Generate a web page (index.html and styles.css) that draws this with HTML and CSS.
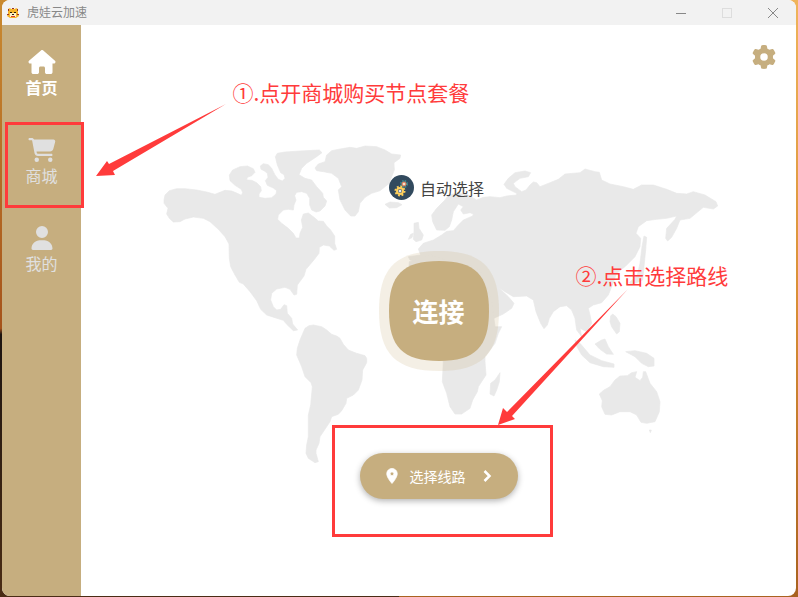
FILE: index.html
```html
<!DOCTYPE html>
<html lang="zh-CN">
<head>
    <meta charset="UTF-8">
    <meta name="viewport" content="width=device-width, initial-scale=1.0">
    <title>虎娃云加速</title>
    <link rel="stylesheet" href="styles.css">
</head>
<body>
    <div class="window">
        <header class="titlebar">
            <svg class="logo" viewBox="0 0 12 12">
                <path d="M1 2L3 1 4 2H8L9 1 11 2V7L12 9 9 11H3L0 9 1 7z" fill="#f5b52a"/>
                <path d="M1 2h1v2H1zM10 2h1v2h-1zM5 1h2v1H5zM0 7h2v1H0zM10 7h2v1h-2z" fill="#9c2f24"/>
                <path d="M3 6h6v4H3z" fill="#fff3c4"/>
                <path d="M3 5h2v1H3zM7 5h2v1H7zM5 7h2v1H5z" fill="#2b1b10"/>
                <path d="M4 9h4v1H4z" fill="#d93a2b"/>
            </svg>
            <h1>虎娃云加速</h1>
            <div class="controls">
                <button aria-label="最小化"><svg viewBox="0 0 12 12"><path d="M1 6.5h10"/></svg></button>
                <button aria-label="最大化" disabled><svg viewBox="0 0 12 12"><rect x="1.5" y="1.5" width="9" height="9"/></svg></button>
                <button aria-label="关闭"><svg viewBox="0 0 12 12"><path d="M1 1l10 10M11 1L1 11"/></svg></button>
            </div>
        </header>

        <div class="body">
            <nav class="sidebar">
                <a href="#home" class="item active">
                    <svg viewBox="0 0 576 512"><path d="M575.8 255.5c0 18-15 32.1-32 32.1h-32l.7 160.2c0 2.7-.2 5.4-.5 8.1V472c0 22.1-17.9 40-40 40H392c-22.1 0-40-17.9-40-40v-88c0-17.7-14.3-32-32-32h-64c-17.7 0-32 14.3-32 32v88c0 22.1-17.9 40-40 40h-80c-22.1 0-40-17.9-40-40V287.6H32c-18 0-32-14-32-32.1 0-9 3-17 10-24L266.4 8c7-7 15-8 22-8s15 2 21 7l255.4 224.5c8 7 12 15 11 24z"/></svg>
                    <span>首页</span>
                </a>
                <a href="#store" class="item marked">
                    <svg viewBox="0 0 576 512"><path d="M0 24C0 10.7 10.7 0 24 0h45.5c22 0 41.5 12.8 50.6 32h411c26.3 0 45.5 25 38.6 50.4l-41 152.3c-8.5 31.4-37 53.3-69.5 53.3H170.7l5.4 28.5c2.2 11.3 12.1 19.5 23.6 19.5H488c13.3 0 24 10.7 24 24s-10.7 24-24 24H199.7c-34.6 0-64.3-24.6-70.7-58.5L77.4 54.5c-.7-3.8-4-6.5-7.9-6.5H24C10.7 48 0 37.3 0 24zM128 464a48 48 0 1 1 96 0 48 48 0 1 1-96 0zm336-48a48 48 0 1 1 0 96 48 48 0 1 1 0-96z"/></svg>
                    <span>商城</span>
                </a>
                <a href="#mine" class="item">
                    <svg viewBox="0 0 448 512"><path d="M224 256a128 128 0 1 0 0-256 128 128 0 1 0 0 256zm-45.7 48C79.8 304 0 383.8 0 482.3 0 498.7 13.3 512 29.7 512h388.6c16.4 0 29.7-13.3 29.7-29.7C448 383.8 368.2 304 269.7 304z"/></svg>
                    <span>我的</span>
                </a>
            </nav>

            <main class="main">
                <svg class="map" viewBox="474 420 1683 990">
                    <!-- north america -->
                    <path transform="translate(480 420)" d="M12 180L15 165 28 152 50 146 75 146 110 150 140 156 165 163 180 157 195 151 215 153 232 160 244 166 248 158 244 148 225 136 210 122 208 105 218 90 240 80 262 78 280 86 285 97 275 107 262 112 260 120 275 121 290 128 302 140 304 152 297 162 297 172 315 175 335 173 348 162 350 152 340 144 322 136 316 122 324 112 322 100 312 92 303 88 301 78 310 71 325 74 335 85 345 105 355 118 367 123 375 115 372 104 362 98 352 75 346 50 352 40 375 36 420 33 478 30 486 38 470 50 440 70 425 85 417 104 435 115 455 120 470 140 488 160 490 172 500 183 495 198 480 213 468 216 455 210 449 195 449 175 440 160 425 155 410 157 404 167 408 180 402 195 400 210 385 208 370 210 355 225 353 238 365 250 385 265 400 280 408 294 418 294 420 280 428 262 424 240 430 222 445 219 462 232 475 243 490 244 500 258 512 270 524 288 524 310 530 328 522 331 508 318 490 315 478 322 477 340 460 362 438 388 432 408 412 435 410 463 402 465 390 448 375 442 350 447 335 460 332 480 340 500 350 510 362 508 372 494 380 497 382 520 395 535 398 552 413 570 400 572 380 553 370 541 345 533 320 525 302 508 290 482 270 455 250 432 238 427 225 405 212 380 208 355 207 312 195 290 175 268 150 245 130 235 100 231 75 237 60 245 40 246 28 235 20 222 24 205 12 190z"/>
                    <!-- greenland, iceland, british isles -->
                    <path transform="translate(870 420)" d="M75 84L85 72 105 65 110 45 125 32 150 27 180 22 200 25 225 18 260 20 285 30 305 42 332 45 330 55 312 68 313 90 305 110 298 130 270 152 245 160 225 172 210 190 205 215 195 228 182 228 165 210 150 180 145 150 155 140 145 115 125 100 100 95 80 92zM285 193L300 186 325 188 336 194 320 203 298 204zM372 250L385 247 387 265 400 285 395 300 378 305 370 298 372 275zM355 298L362 283 370 280 366 293z"/>
                    <!-- south america -->
                    <path transform="translate(840 870)" d="M75 115L87 107 100 105 125 110 140 120 155 133 170 138 180 145 190 163 205 180 230 190 255 197 260 205 260 218 248 240 246 270 235 300 220 315 200 325 198 340 185 362 175 373 155 380 150 395 120 440 117 460 108 480 108 490 115 515 105 518 85 505 78 490 80 465 85 440 85 375 92 345 97 290 93 278 75 260 65 230 50 195 52 175 60 150z"/>
                    <!-- europe, asia, arabia -->
                    <path d="M1255 747L1270 730 1300 720 1325 705 1340 694 1360 692 1375 675 1390 660 1418 648 1420 642 1410 638 1390 642 1382 630 1390 620 1375 612 1360 635 1355 660 1348 680 1335 691 1310 690 1298 665 1295 645 1310 625 1335 600 1345 585 1370 580 1400 583 1430 600 1450 592 1470 590 1500 593 1520 588 1550 585 1550 580 1520 565 1512 553 1525 535 1545 518 1575 513 1592 518 1585 530 1560 535 1540 550 1545 560 1565 575 1578 570 1590 555 1600 546 1610 548 1620 560 1650 548 1675 538 1695 522 1740 518 1755 507 1785 515 1798 517 1805 540 1830 552 1870 560 1900 568 1925 555 1960 555 2000 568 2030 580 2060 582 2080 575 2115 585 2148 605 2153 618 2140 627 2110 622 2100 630 2070 655 2040 660 2030 685 2015 712 2003 723 1997 715 2000 685 2025 658 2030 648 2000 655 1970 658 1940 662 1915 680 1908 700 1922 715 1920 740 1905 770 1875 800 1850 820 1835 860 1825 885 1805 908 1780 915 1765 925 1770 945 1775 970 1760 995 1740 985 1745 1010 1730 990 1725 955 1715 930 1700 917 1680 920 1660 935 1648 955 1642 975 1632 986 1622 970 1608 935 1600 900 1580 888 1540 890 1515 875 1495 862 1525 890 1542 910 1535 925 1510 942 1475 958 1455 930 1380 820 1275 790 1230 780 1225 770 1262 765z"/>
                    <!-- africa and madagascar -->
                    <path d="M1228 785L1290 765 1340 780 1440 810 1475 900 1485 980 1505 980 1495 1000 1485 1030 1455 1070 1455 1085 1458 1125 1435 1160 1432 1175 1418 1200 1410 1225 1385 1242 1365 1242 1350 1220 1340 1180 1327 1145 1330 1083 1250 1050 1220 900zM1500 1118L1498 1145 1490 1170 1482 1188 1470 1182 1472 1150 1485 1140z"/>
                    <!-- sakhalin and japan -->
                    <path d="M1932 708L1940 712 1937 750 1932 800 1928 840 1895 855 1888 848 1912 825 1920 790 1926 740z"/>
                    <!-- islands and australia -->
                    <path transform="translate(1620 720)" d="M212 228L218 222 228 230 240 250 238 275 230 282 215 260 210 245zM165 312L185 300 195 297 205 320 220 343 200 342 180 328zM105 300L120 310 150 345 185 362 222 372 222 382 190 380 150 368 125 345 108 315zM257 335L285 332 320 340 342 355 342 378 325 380 305 370 285 350zM178 462L192 450 210 440 225 420 240 408 262 407 275 398 290 395 285 412 300 422 308 412 310 395 317 395 330 430 350 455 360 485 358 515 345 545 320 550 303 547 290 525 270 515 240 515 215 525 195 523 185 500 187 482zM328 570h6l-3 8z"/>
                </svg>

                <div class="toolbar">
                    <button class="settings" aria-label="设置">
                        <svg viewBox="0 0 512 512"><path d="M495.9 166.6c3.2 8.7.5 18.4-6.4 24.6l-43.3 39.4c1.1 8.3 1.7 16.8 1.7 25.4s-.6 17.1-1.7 25.4l43.3 39.4c6.9 6.2 9.6 15.9 6.4 24.6-4.4 11.9-9.7 23.3-15.8 34.3l-4.7 8.1c-6.6 11-14 21.4-22.1 31.2-5.9 7.2-15.7 9.6-24.5 6.8l-55.7-17.7c-13.4 10.3-28.2 18.9-44 25.4l-12.5 57.1c-2 9.1-9 16.3-18.2 17.8-13.8 2.3-28 3.5-42.5 3.5s-28.7-1.2-42.5-3.5c-9.2-1.5-16.2-8.7-18.2-17.8l-12.5-57.1c-15.8-6.5-30.6-15.1-44-25.4l-55.6 17.8c-8.8 2.8-18.6.3-24.5-6.8-8.1-9.8-15.5-20.2-22.1-31.2l-4.7-8.1c-6.1-11-11.4-22.4-15.8-34.3-3.2-8.7-.5-18.4 6.4-24.6l43.3-39.4C64.6 273.1 64 264.6 64 256s.6-17.1 1.7-25.4l-43.3-39.4c-6.9-6.2-9.6-15.9-6.4-24.6 4.4-11.9 9.7-23.3 15.8-34.3l4.7-8.1c6.6-11 14-21.4 22.1-31.2 5.9-7.2 15.7-9.6 24.5-6.8l55.7 17.7c13.4-10.3 28.2-18.9 44-25.4l12.5-57.1c2-9.1 9-16.3 18.2-17.8C227.3 1.2 241.5 0 256 0s28.7 1.2 42.5 3.5c9.2 1.5 16.2 8.7 18.2 17.8l12.5 57.1c15.8 6.5 30.6 15.1 44 25.4l55.7-17.7c8.8-2.8 18.6-.3 24.5 6.8 8.1 9.8 15.5 20.2 22.1 31.2l4.7 8.1c6.1 11 11.4 22.4 15.8 34.3zM256 336a80 80 0 1 0 0-160 80 80 0 1 0 0 160z"/></svg>
                    </button>
                </div>

                <div class="panel">
                    <div class="mode">
                        <svg viewBox="0 0 25 25">
                            <circle cx="12.5" cy="12.5" r="12.5" fill="#324a5e"/>
                            <circle cx="15" cy="9" r="3" fill="none" stroke="#3f8f90" stroke-width="2" stroke-dasharray="1.4 1"/>
                            <circle cx="15" cy="9" r="2" fill="#f4e0c8" stroke="#e2734f"/>
                            <circle cx="11" cy="16" r="4.5" fill="none" stroke="#ffd05b" stroke-width="2" stroke-dasharray="1.8 1.7"/>
                            <circle cx="11" cy="16" r="3" fill="#324a5e" stroke="#ffd05b" stroke-width="2"/>
                            <circle cx="11" cy="16" r="1.5" fill="#e6e9ee"/>
                        </svg>
                        <span>自动选择</span>
                    </div>

                    <button class="connect">
                        <svg viewBox="0 0 120 120">
                            <path class="halo" d="M60 0C103 0 120 17 120 60S103 120 60 120 0 103 0 60 17 0 60 0z"/>
                            <path d="M60 10C96 10 110 24 110 60S96 110 60 110 10 96 10 60 24 10 60 10z"/>
                        </svg>
                        <span>连接</span>
                    </button>

                    <div class="route-wrap">
                        <button class="route">
                            <svg viewBox="0 0 24 24"><path d="M12 2C8.1 2 5 5.1 5 9c0 5.2 7 13 7 13s7-7.8 7-13c0-3.9-3.1-7-7-7zm0 9.500a2.500 2.500 0 0 1 0-5 2.500 2.500 0 0 1 0 5z" stroke="#fff"/></svg>
                            <span>选择线路</span>
                            <svg class="arrow" viewBox="0 0 24 24"><path d="M9 6l6 6-6 6"/></svg>
                        </button>
                    </div>
                </div>

                <!-- guide notes -->
                <svg class="pointers" viewBox="95 100 540 330">
                    <path d="M96 176L107 161 109 164 226 104 113 171 115 175z"/>
                    <path d="M498 425L503 408 507 412 628 289 512 416 515 419z"/>
                </svg>
                <p class="note note-store">①.点开商城购买节点套餐</p>
                <p class="note note-route">②.点击选择路线</p>
            </main>
        </div>
    </div>
</body>
</html>
```

FILE: styles.css
```css
* { box-sizing: border-box; }
body {
    margin: 0; min-height: 100vh; padding: 0 2px 1px; display: flex;
    font-family: "Noto Sans CJK SC", sans-serif;
    background:
        linear-gradient(#c98a30, #a5531b 55%, #1c1411 56%, #4a2c14) left / 50% 100% no-repeat,
        linear-gradient(#efb45a, #d98f35 50%, #a8621f) right / 50% 100% no-repeat;
}
button { padding: 0; border: none; background: none; font-family: inherit; cursor: pointer; }
svg { display: block; flex: none; }

.window { flex: 1; display: flex; flex-direction: column; background: #fff; border-radius: 8px; overflow: hidden; }

.titlebar { display: flex; align-items: center; height: 25px; padding: 0 11px 0 5px; background: #f2f2f2; }
.logo { width: 12px; height: 12px; }
.titlebar h1 { margin: 0 0 2px 8px; font-size: 12px; font-weight: 400; line-height: 22px; color: #888; }
.controls { display: flex; gap: 22px; margin-left: auto; }
.controls button { width: 24px; height: 24px; display: flex; align-items: center; justify-content: center; }
.controls svg { width: 12px; height: 12px; fill: none; stroke: #888; }
.controls button:disabled svg { stroke: #ddd; }

.body { flex: 1; display: flex; }
.sidebar { width: 79px; padding-top: 8px; background: #c6ae7f; }
.item {
    position: relative; display: flex; flex-direction: column; align-items: center; gap: 1px;
    height: 88px; padding-top: 17px; font-size: 16px; line-height: 24px; color: #e0e0e0; text-decoration: none;
}
.item svg { width: 28px; height: 24px; fill: currentColor; }
.active { color: #fff; font-weight: bold; }
.marked::after { content: ""; position: absolute; z-index: 2; inset: 1px -3px 1px 3px; border: 3px solid #ff3b3b; }

.main { position: relative; flex: 1; }
.map { position: absolute; top: 115px; left: calc(50% - 281px); width: 561px; height: 330px; fill: #e9e9e9; stroke: #e9e9e9; stroke-width: 2; stroke-linejoin: round; }
.toolbar { position: relative; display: flex; justify-content: flex-end; padding: 20px 20px 0; }
.settings svg { width: 24px; height: 24px; fill: #c6ae7f; }

.panel { position: relative; display: flex; flex-direction: column; align-items: center; padding-top: 106px; }
.mode { display: flex; align-items: center; gap: 6px; height: 25px; padding-right: 4px; font-size: 16px; line-height: 24px; color: #444; }
.mode svg { width: 25px; height: 25px; }

.connect { display: grid; place-items: center; margin-top: 51px; color: #fff; font-size: 26px; font-weight: bold; line-height: 32px; }
.connect svg, .connect span { grid-area: 1 / 1; }
.connect svg { width: 120px; height: 120px; fill: #c6ae7f; }
.connect .halo { fill-opacity: 0.2; }

.route-wrap { position: relative; margin-top: 82px; }
.route-wrap::after { content: ""; position: absolute; inset: -28px -35px -38px -28px; border: 3px solid #ff3b3b; pointer-events: none; }
.route {
    display: flex; align-items: center; gap: 9px; height: 46px; padding: 0 21px 0 23px;
    border-radius: 23px; background: #c6ae7f; color: #fff; font-size: 14px; line-height: 20px;
    box-shadow: 0 2px 6px rgba(0, 0, 0, 0.3);
}
.route svg { width: 18px; height: 18px; fill: #fff; }
.route .arrow { width: 20px; height: 20px; margin-left: 2px; fill: none; stroke: #fff; stroke-width: 3; }

.pointers { position: absolute; top: 75px; left: calc(50% - 344px); width: 540px; height: 330px; fill: #ff3b3b; pointer-events: none; }
.note { position: absolute; margin: 0; font-size: 21px; line-height: 28px; color: #ff3b3b; white-space: nowrap; }
.note-store { top: 53px; left: calc(50% - 206px); }
.note-route { top: 236px; left: calc(50% + 137px); }
```
